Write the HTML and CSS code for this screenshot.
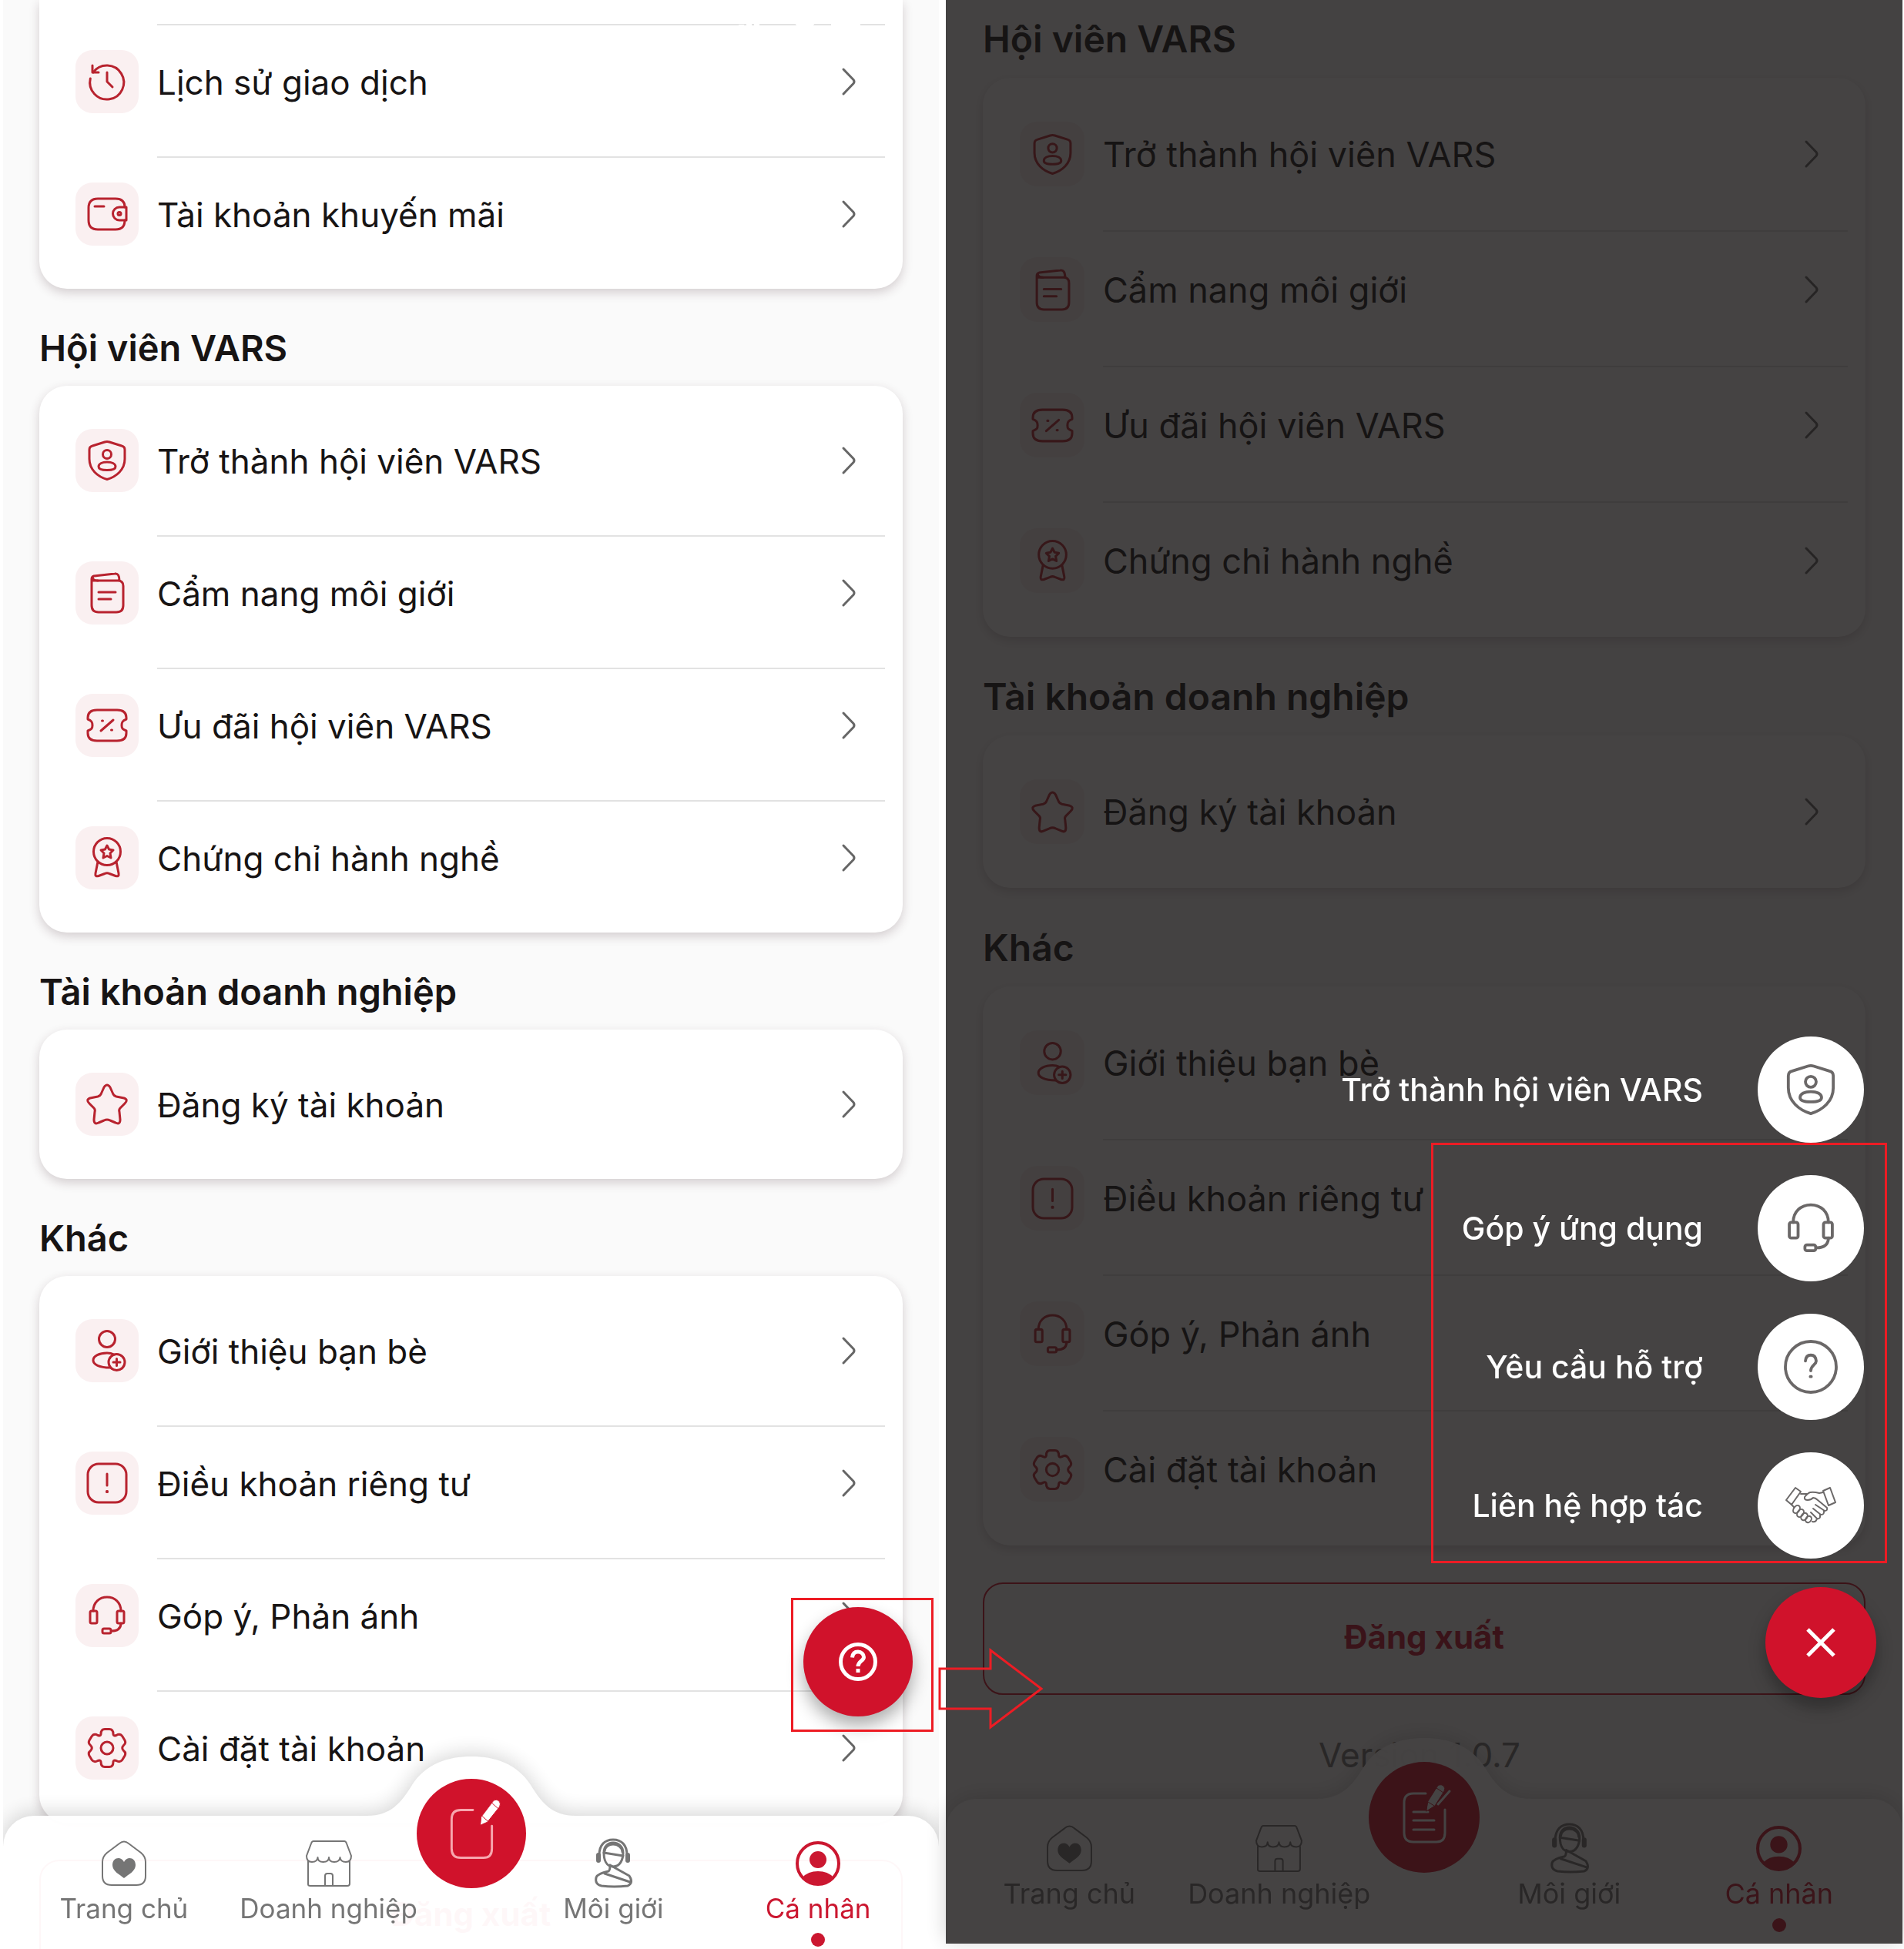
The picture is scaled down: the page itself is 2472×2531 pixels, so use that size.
FILE: index.html
```html
<!DOCTYPE html>
<html lang="vi">
<head>
<meta charset="utf-8">
<meta name="viewport" content="width=device-width, initial-scale=1">
<title>Cá nhân</title>
<link rel="stylesheet" href="styles.css">
</head>
<body>
<svg class="sprite" aria-hidden="true">
  <symbol id="i-history" viewBox="0 0 52 52"><path d="M8 14A22 22 0 1 1 4.300 22"/><path d="M7 5V14H15"/><path d="M26 14V26L33 33"/></symbol>
  <symbol id="i-wallet" viewBox="0 0 52 52"><path d="M49 17Q49 6 37 6H14Q2 6 2 18V34Q2 46 14 46H37Q49 46 49 34"/><path d="M51 17H42A8.500 8.500 0 0 0 42 34H51Z"/><circle cx="42" cy="25.500" r="2"/><path d="M10 16H22"/></symbol>
  <symbol id="i-shield" viewBox="0 0 52 52"><path d="M23 2Q26 1 29 2L45 7Q49 8 49 12V24C49 38 38 47 26 50.500C14 47 3 38 3 24V12Q3 8 7 7Z"/><circle cx="26" cy="18" r="5.500"/><path d="M15 34C15 30 20 28 26 28S37 30 37 34C37 37 33 38.500 26 38.500S15 37 15 34Z"/></symbol>
  <symbol id="i-book" viewBox="0 0 52 52"><path d="M6 10H40Q47 10 47 17V42Q47 51 38 51H15Q6 51 6 42V8Q6 5 9 4L36 1Q42 0 42 10"/><path d="M7 6Q8 10 14 10M15 25H37M15 34H31"/></symbol>
  <symbol id="i-ticket" viewBox="0 0 52 52"><path d="M13 6H39Q51 6 51 16V18C46 20 45 22 45 26S46 31 51 33V36Q51 46 39 46H13Q1 46 1 36V33C6 31 7 30 7 26S6 20 1 18V16Q1 6 13 6Z"/><path d="M18 33L34 19M19.500 20H20.500M31.500 32H32.500"/></symbol>
  <symbol id="i-badge" viewBox="0 0 52 52"><circle cx="26" cy="18" r="17.500"/><path d="M26 10L28.600 15L34 16L30 20L31 26L26 23.500L21 26L22 20L18 16L23.400 15Z"/><path d="M14 31L11 46Q10 51 15 49.500L23 46.500Q26 45 29 46.500L37 49.500Q42 51 41 46L38 31"/></symbol>
  <symbol id="i-star" viewBox="0 0 52 52"><path d="M22 4Q26-2 30 4L34 13Q35 15 38 16L48 18Q54 20 49 25L43 31Q41 33 42 36L43 46Q43 53 37 50L30 47Q26 45 22 47L15 50Q9 53 9 46L10 36Q11 33 9 31L3 25Q-2 20 4 18L14 16Q17 15 18 13Z"/></symbol>
  <symbol id="i-invite" viewBox="0 0 52 52"><circle cx="26" cy="11" r="10.500"/><path d="M35 31Q31 29 26 29C16 29 8 33 8 38.500S16 48 30 48"/><circle cx="38.500" cy="41" r="10.500"/><path d="M34 41H43M38.500 36.500V45.500"/></symbol>
  <symbol id="i-terms" viewBox="0 0 52 52"><rect x="1" y="1" width="50" height="50" rx="14"/><path d="M26 14V29M25.500 36.500H26.500M25.500 37.500H26.500"/></symbol>
  <symbol id="i-headset" viewBox="0 0 52 52"><path d="M8 20C8 9 16 2 26 2S44 9 44 20"/><rect x="4" y="20" width="9" height="16" rx="2"/><rect x="39" y="20" width="9" height="16" rx="2"/><path d="M44 36V37Q43 46 32 46"/><rect x="20" y="43" width="11" height="6" rx="2"/></symbol>
  <symbol id="i-gear" viewBox="0 0 52 52"><path d="M18 8Q18 1.500 23 1.500H29Q34 1.500 34 8Q34.500 11 38 9.500Q43 6.500 46 11L49 16Q51 20 47.500 22.500Q44 26 47.500 29.500Q51 32 49 36L46 41Q43 45.500 38 42.500Q34.500 41 34 44Q34 50.500 29 50.500H23Q18 50.500 18 44Q17.500 41 14 42.500Q9 45.500 6 41L3 36Q1 32 4.500 29.500Q8 26 4.500 22.500Q1 20 3 16L6 11Q9 6.500 14 9.500Q17.500 11 18 8Z"/><circle cx="26" cy="26" r="8"/></symbol>
  <symbol id="i-chevron" viewBox="0 0 18 36"><path d="M2 2L15 15.500Q17 18 15 20.500L2 34"/></symbol>
  <symbol id="i-question" viewBox="0 0 52 52"><circle cx="26" cy="26" r="26"/><path d="M20.500 20Q21 14 26 14T31.500 20C31.500 24 26 24 26 30M25.500 36H26.500"/></symbol>
  <symbol id="i-handshake" viewBox="0 0 66 48"><path d="M13 1L20 6L8 23L1 17ZM49 5L58 1L65 20L56 24Z"/><path d="M20 9H29M49 7L44 8Q37 6 32 7Q29 8 25 13Q24 17 29 17Q33 17 36 14Q39 14 42 17L54 27Q55 31 51 31L39 23M50 31Q51 36 46 36L36 28M45 36Q46 42 41 41L33 33M41 41Q40 46 35 45M8 23L11 26"/><ellipse cx="14.500" cy="29" rx="3.800" ry="5.500" transform="rotate(35 14.500 29)"/><ellipse cx="19.500" cy="34" rx="3.800" ry="5.500" transform="rotate(35 19.500 34)"/><ellipse cx="24.500" cy="38.500" rx="3.800" ry="5" transform="rotate(35 24.500 38.500)"/><ellipse cx="30" cy="42" rx="3.500" ry="4.500" transform="rotate(35 30 42)"/></symbol>
  <symbol id="i-home" viewBox="0 0 60 60"><path d="M24 4Q30-1 36 4L52 16Q58 21 58 28V46Q58 58 46 58H14Q2 58 2 46V28Q2 21 8 16Z"/><path class="solid" d="M30 28C34 20 45 22 45 32C45 40 36 44 30 49C24 44 15 40 15 32C15 22 26 20 30 28Z"/></symbol>
  <symbol id="i-store" viewBox="0 0 60 60"><path d="M10 1H50Q52 1 53 4L59 20Q59 28 52 28Q45 28 44.500 22Q44 28 37 28Q30 28 30 22Q30 28 22.500 28Q15.500 28 15.500 22Q15 28 8 28Q1 28 1 20L7 4Q8 1 10 1ZM3 27V57Q3 59 6 59H54Q57 59 57 56V27M25 59V46Q25 43 28 43H32Q35 43 35 46V59"/></symbol>
  <symbol id="i-agent" viewBox="-1 3 60 60"><path class="band" d="M11 22C11 9 18 2 29 2S47 9 47 22"/><path class="wide" d="M10 22V29M48 22V29"/><path class="band" d="M17 19C17 11 22 6 29 6S42 11 42 19C42 28 38 37 29 37S17 28 17 19Z"/><path class="band" d="M18 17C18 12 23 8 29 8S41 12 41 18M17 19L42 23M25 35L50 49Q56 58 48 62Q30 64 14 62Q5 60 7 51Q9 46 23 43Q25 42 25 35M18 46L51 57"/></symbol>
  <symbol id="i-user" viewBox="0 0 60 60"><circle class="ring" cx="30" cy="30" r="27"/><circle class="solid" cx="30" cy="25" r="11"/><path class="solid" d="M10 48Q17 40 30 40T50 48Q42 58 30 58T10 48Z"/></symbol>
  <symbol id="i-bump" viewBox="0 0 270 79"><path d="M0 79V77C30 77 44 60 58 37C76 9 105 0 135 0S194 9 212 37C226 60 240 77 270 77V79Z"/></symbol>
</svg>

<main class="stage">
  <section class="phone phone--list" aria-label="Danh mục cá nhân">
    <svg class="status" viewBox="0 0 176 44" aria-hidden="true"><path d="M2 28H9V36H2ZM12 20H19V36H12ZM22 14H29V36H22ZM32 6H39V36H32ZM82 14Q98 0 114 14L98 36ZM132 10H170V34H132Z"/></svg>
    <div class="content">
      <ul class="card card--scrolled">
        <li class="sliver"></li>
        <li><a class="row" href="#"><span class="tile"><svg><use href="#i-history"/></svg></span><span class="line"><span class="label">Lịch sử giao dịch</span><svg class="chev"><use href="#i-chevron"/></svg></span></a></li>
        <li><a class="row" href="#"><span class="tile"><svg><use href="#i-wallet"/></svg></span><span class="line"><span class="label">Tài khoản khuyến mãi</span><svg class="chev"><use href="#i-chevron"/></svg></span></a></li>
      </ul>
      <h2>Hội viên VARS</h2>
      <ul class="card">
        <li><a class="row" href="#"><span class="tile"><svg><use href="#i-shield"/></svg></span><span class="line"><span class="label">Trở thành hội viên VARS</span><svg class="chev"><use href="#i-chevron"/></svg></span></a></li>
        <li><a class="row" href="#"><span class="tile"><svg><use href="#i-book"/></svg></span><span class="line"><span class="label">Cẩm nang môi giới</span><svg class="chev"><use href="#i-chevron"/></svg></span></a></li>
        <li><a class="row" href="#"><span class="tile"><svg><use href="#i-ticket"/></svg></span><span class="line"><span class="label">Ưu đãi hội viên VARS</span><svg class="chev"><use href="#i-chevron"/></svg></span></a></li>
        <li><a class="row" href="#"><span class="tile"><svg><use href="#i-badge"/></svg></span><span class="line"><span class="label">Chứng chỉ hành nghề</span><svg class="chev"><use href="#i-chevron"/></svg></span></a></li>
      </ul>
      <h2>Tài khoản doanh nghiệp</h2>
      <ul class="card">
        <li><a class="row" href="#"><span class="tile"><svg><use href="#i-star"/></svg></span><span class="line"><span class="label">Đăng ký tài khoản</span><svg class="chev"><use href="#i-chevron"/></svg></span></a></li>
      </ul>
      <h2>Khác</h2>
      <ul class="card">
        <li><a class="row" href="#"><span class="tile"><svg><use href="#i-invite"/></svg></span><span class="line"><span class="label">Giới thiệu bạn bè</span><svg class="chev"><use href="#i-chevron"/></svg></span></a></li>
        <li><a class="row" href="#"><span class="tile"><svg><use href="#i-terms"/></svg></span><span class="line"><span class="label">Điều khoản riêng tư</span><svg class="chev"><use href="#i-chevron"/></svg></span></a></li>
        <li><a class="row" href="#"><span class="tile"><svg><use href="#i-headset"/></svg></span><span class="line"><span class="label">Góp ý, Phản ánh</span><svg class="chev"><use href="#i-chevron"/></svg></span></a></li>
        <li><a class="row" href="#"><span class="tile"><svg><use href="#i-gear"/></svg></span><span class="line"><span class="label">Cài đặt tài khoản</span><svg class="chev"><use href="#i-chevron"/></svg></span></a></li>
      </ul>
      <button class="logout" type="button">Đăng xuất</button>
    </div>

    <nav class="nav" aria-label="Điều hướng chính">
      <div class="nav-bg"><svg class="bump"><use href="#i-bump"/></svg></div>
      <a class="tab" href="#"><svg><use href="#i-home"/></svg>Trang chủ</a>
      <a class="tab" href="#"><svg><use href="#i-store"/></svg>Doanh nghiệp</a>
      <button class="compose" type="button" aria-label="Đăng tin">
        <svg viewBox="0 0 144 144"><path class="sheet" d="M74 41H58Q46 41 46 53V92Q46 104 58 104H88Q99 104 99 92V62"/><path class="pen" d="M85 50L101 29Q105 26 109 30Q111 33 109 37L93 57L84 61ZM98 31L107 39M86 49L94 56"/></svg>
      </button>
      <a class="tab" href="#"><svg><use href="#i-agent"/></svg>Môi giới</a>
      <a class="tab tab--active" href="#"><svg><use href="#i-user"/></svg>Cá nhân<i class="dot"></i></a>
    </nav>
    <button class="fab" type="button" aria-label="Trợ giúp">
      <svg viewBox="0 0 50 50"><circle cx="25" cy="25" r="22.500"/><path d="M17.500 19.500C18 14 21 12 25 12S32.500 15 32.500 19C32.500 24 25 24 25 31M25 34V39"/></svg>
    </button>
    <div class="mark mark--fab"></div>
  </section>

  <section class="phone phone--menu" aria-label="Menu hỗ trợ">
    <div class="content">
      <h2>Hội viên VARS</h2>
      <ul class="card">
        <li><a class="row" href="#"><span class="tile"><svg><use href="#i-shield"/></svg></span><span class="line"><span class="label">Trở thành hội viên VARS</span><svg class="chev"><use href="#i-chevron"/></svg></span></a></li>
        <li><a class="row" href="#"><span class="tile"><svg><use href="#i-book"/></svg></span><span class="line"><span class="label">Cẩm nang môi giới</span><svg class="chev"><use href="#i-chevron"/></svg></span></a></li>
        <li><a class="row" href="#"><span class="tile"><svg><use href="#i-ticket"/></svg></span><span class="line"><span class="label">Ưu đãi hội viên VARS</span><svg class="chev"><use href="#i-chevron"/></svg></span></a></li>
        <li><a class="row" href="#"><span class="tile"><svg><use href="#i-badge"/></svg></span><span class="line"><span class="label">Chứng chỉ hành nghề</span><svg class="chev"><use href="#i-chevron"/></svg></span></a></li>
      </ul>
      <h2>Tài khoản doanh nghiệp</h2>
      <ul class="card">
        <li><a class="row" href="#"><span class="tile"><svg><use href="#i-star"/></svg></span><span class="line"><span class="label">Đăng ký tài khoản</span><svg class="chev"><use href="#i-chevron"/></svg></span></a></li>
      </ul>
      <h2>Khác</h2>
      <ul class="card">
        <li><a class="row" href="#"><span class="tile"><svg><use href="#i-invite"/></svg></span><span class="line"><span class="label">Giới thiệu bạn bè</span></span></a></li>
        <li><a class="row" href="#"><span class="tile"><svg><use href="#i-terms"/></svg></span><span class="line"><span class="label">Điều khoản riêng tư</span></span></a></li>
        <li><a class="row" href="#"><span class="tile"><svg><use href="#i-headset"/></svg></span><span class="line"><span class="label">Góp ý, Phản ánh</span></span></a></li>
        <li><a class="row" href="#"><span class="tile"><svg><use href="#i-gear"/></svg></span><span class="line"><span class="label">Cài đặt tài khoản</span></span></a></li>
      </ul>
      <button class="logout" type="button">Đăng xuất</button>
      <p class="version">Version 1.0.7</p>
    </div>

    <nav class="nav" aria-label="Điều hướng chính">
      <div class="nav-bg"><svg class="bump"><use href="#i-bump"/></svg></div>
      <a class="tab" href="#"><svg><use href="#i-home"/></svg>Trang chủ</a>
      <a class="tab" href="#"><svg><use href="#i-store"/></svg>Doanh nghiệp</a>
      <button class="compose" type="button" aria-label="Đăng tin">
        <svg viewBox="0 0 144 144"><path class="sheet sheet--full" d="M74 41H58Q46 41 46 53V92Q46 104 58 104H88Q99 104 99 92V62M58 65H77M58 76H85M58 88H85"/><path class="pen" d="M77 51L89 32Q92 28 97 31Q100 34 98 38L86 57L75 64ZM88 34L97 40M77 52L85 57"/><path class="clip" d="M105 38L90 55"/></svg>
      </button>
      <a class="tab" href="#"><svg><use href="#i-agent"/></svg>Môi giới</a>
      <a class="tab tab--active" href="#"><svg><use href="#i-user"/></svg>Cá nhân<i class="dot"></i></a>
    </nav>

    <div class="scrim"></div>
    <ul class="dial">
      <li><a href="#">Trở thành hội viên VARS<span class="disc"><svg><use href="#i-shield"/></svg></span></a></li>
      <li><a href="#">Góp ý ứng dụng<span class="disc"><svg><use href="#i-headset"/></svg></span></a></li>
      <li><a href="#">Yêu cầu hỗ trợ<span class="disc"><svg><use href="#i-question"/></svg></span></a></li>
      <li><a href="#">Liên hệ hợp tác<span class="disc"><svg><use href="#i-handshake"/></svg></span></a></li>
    </ul>
    <button class="fab" type="button" aria-label="Đóng">
      <svg viewBox="0 0 50 50"><path d="M8 8L42 42M42 8L8 42"/></svg>
    </button>
    <div class="mark mark--dial"></div>
    <svg class="arrow" viewBox="0 0 136 108" aria-hidden="true"><path d="M2 28H68V4L134 54L68 104V80H2Z"/></svg>
  </section>
</main>
</body>
</html>
```
FILE: styles.css
```css
* { box-sizing: border-box; }

body {
  margin: 0;
  background: #fff;
  color: #171414;
  font-family: Inter, "Noto Sans", sans-serif;
}

ul { list-style: none; margin: 0; padding: 0; }
a { color: inherit; text-decoration: none; }
button { border: 0; font-family: inherit; cursor: pointer; }
svg { fill: none; stroke: currentColor; stroke-linecap: round; stroke-linejoin: round; overflow: visible; }
symbol { overflow: visible; }
.sprite { position: absolute; width: 0; height: 0; }
.solid { fill: currentColor; stroke: none; }

.stage {
  display: grid;
  grid-template-columns: 1215fr 1242fr;
  align-items: start;
  gap: 9px;
  padding: 0 2px 0 4px;
}

.phone {
  position: relative;
  background: #fafafa;
  --gutter: 47px;
  --tile: 82px;
  --icon: 52px;
  --row-top: 32px;
  --row-bottom: 56px;
  --item: 44px;
  --title: 47px;
  --title-line: 58px;
  --tab: 35px;
  --tab-icon: 60px;
  --fab: 142px;
  --bump: 270px;
  --bump-rise: 77px;
  --nav-top: 32px;
  --nav-height: 173px;
  --fab-bottom: 302px;
}

.phone--list { height: 100vh; overflow: hidden; }

.phone--menu {
  --gutter: 48px;
  --tile: 84px;
  --icon: 53px;
  --row-top: 33px;
  --row-bottom: 57px;
  --item: 45px;
  --title: 48px;
  --title-line: 60px;
  --tab: 36px;
  --tab-icon: 61px;
  --fab: 144px;
  --bump: 276px;
  --bump-rise: 79px;
  --nav-top: 34px;
  --nav-height: 188px;
  --fab-bottom: 319px;
}

.content { padding: 0 var(--gutter); }
.phone--menu .content { padding-top: 21px; padding-bottom: 219px; }

h2 {
  margin: 48px 0 20px;
  font-size: var(--title);
  line-height: var(--title-line);
  font-weight: 600;
}
.phone--menu h2:first-child { margin-top: 0; }

.card {
  padding-top: 24px;
  border-radius: 36px;
  background: #fff;
  box-shadow: 0 5px 14px rgba(60, 30, 40, 0.2);
}
.card--scrolled { padding-top: 0; border-radius: 0 0 36px 36px; }
.sliver { height: 33px; margin: 0 23px 0 calc(var(--gutter) + var(--tile) + 24px); border-bottom: 2px solid #e2e2e2; }

.row {
  display: flex;
  gap: 24px;
  padding: 0 23px 0 var(--gutter);
  font-size: var(--item);
}
.tile {
  display: flex;
  flex: none;
  align-items: center;
  justify-content: center;
  width: var(--tile);
  height: var(--tile);
  margin-top: var(--row-top);
  border-radius: 22px;
  background: #faf0f1;
  color: #b8232f;
}
.tile svg { width: var(--icon); height: var(--icon); stroke-width: 3; }
.line {
  display: flex;
  flex: 1;
  align-items: center;
  justify-content: space-between;
  padding: var(--row-top) 38px var(--row-bottom) 0;
  border-bottom: 2px solid #e2e2e2;
}
.label { padding-top: 2px; line-height: calc(var(--tile) - 2px); }
li:last-child .line { border-bottom: 0; }
.chev { width: 18px; height: 36px; color: #666; stroke-width: 3; }

.logout {
  display: block;
  width: 100%;
  height: 146px;
  margin-top: 48px;
  padding: 0 0 6px;
  border: 2px solid #d0122b;
  border-radius: 26px;
  background: transparent;
  color: #c8102e;
  font-size: 42px;
  font-weight: 700;
}
.version {
  margin: 52px 0 0;
  padding-right: 12px;
  color: #757575;
  font-size: 44px;
  line-height: 52px;
  text-align: center;
}

.status { position: absolute; top: 12px; right: 96px; width: 176px; height: 44px; z-index: 1; fill: #fff; stroke: none; }

.nav {
  position: absolute;
  inset: auto 0 0;
  display: grid;
  grid-template-columns: 1fr 1fr 104px 1fr 1fr;
  height: var(--nav-height);
  padding: var(--nav-top) 24px 0;
  color: #757575;
  font-size: var(--tab);
}
.nav-bg {
  position: absolute;
  inset: 0;
  border-radius: 40px 40px 0 0;
  background: #fff;
  opacity: 0.97;
  filter: drop-shadow(0 -3px 14px rgba(0, 0, 0, 0.18));
}
.bump {
  position: absolute;
  bottom: calc(100% - 2px);
  left: calc(50% - var(--bump) / 2);
  width: var(--bump);
  height: calc(var(--bump-rise) + 2px);
  fill: #fff;
  stroke: none;
}
.tab {
  position: relative;
  display: flex;
  flex-direction: column;
  align-items: center;
  gap: 7px;
  line-height: 42px;
  white-space: nowrap;
}
.tab svg { flex: none; width: var(--tab-icon); height: var(--tab-icon); stroke-width: 2; }
.band { stroke-width: 3; }
.wide { stroke-width: 6; }
.ring { stroke-width: 4; }
.tab--active { color: #cb1730; }
.dot { flex: none; width: 18px; height: 18px; margin-top: 4px; border-radius: 50%; background: currentColor; }
.compose {
  position: relative;
  justify-self: center;
  width: var(--fab);
  height: var(--fab);
  margin-top: calc(-48px - var(--nav-top));
  padding: 0;
  border-radius: 50%;
  background: #d0122b;
}
.compose svg { display: block; width: 100%; height: 100%; }
.sheet { stroke: #f7a6ae; stroke-width: 3; }
.sheet--full { stroke: #fff; }
.pen { fill: #fff; stroke: #d0122b; stroke-width: 1; }
.clip { stroke: #fff; stroke-width: 3; }

.fab {
  position: absolute;
  right: 34px;
  bottom: var(--fab-bottom);
  display: flex;
  align-items: center;
  justify-content: center;
  width: var(--fab);
  height: var(--fab);
  border-radius: 50%;
  background: #d0122b;
  box-shadow: 0 12px 22px rgba(0, 0, 0, 0.32);
  color: #fff;
}
.fab svg { width: 50px; height: 50px; stroke-width: 5; stroke-linecap: butt; }

.scrim { position: absolute; inset: 0; background: rgba(23, 20, 20, 0.8); }

.dial {
  position: absolute;
  right: 50px;
  bottom: 500px;
  display: grid;
  gap: 42px;
}
.dial a {
  display: flex;
  align-items: center;
  justify-content: flex-end;
  gap: 71px;
  color: #fff;
  font-size: 41px;
  font-weight: 500;
}
.disc {
  display: flex;
  align-items: center;
  justify-content: center;
  width: 138px;
  height: 138px;
  border-radius: 50%;
  background: #fff;
  color: #6b6868;
}
.disc svg { width: 66px; height: 66px; stroke-width: 3; }
.dial li:last-child svg { stroke-width: 2; }

.mark { position: absolute; border: 3px solid #ed1c24; pointer-events: none; }
.mark--fab { right: 7px; bottom: 282px; width: 185px; height: 174px; }
.mark--dial { right: 20px; bottom: 494px; width: 592px; height: 546px; }
.arrow { position: absolute; left: -10px; bottom: 277px; width: 136px; height: 108px; stroke: #ed1c24; stroke-width: 3; stroke-linejoin: miter; }
```
